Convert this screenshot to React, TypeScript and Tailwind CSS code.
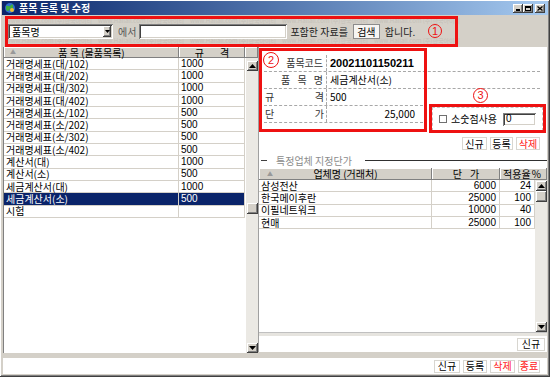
import React from 'react';

const listRows: [string, string][] = [
  ['거래명세표(대/102)', '1000'],
  ['거래명세표(대/202)', '1000'],
  ['거래명세표(대/302)', '1000'],
  ['거래명세표(대/402)', '1000'],
  ['거래명세표(소/102)', '500'],
  ['거래명세표(소/202)', '500'],
  ['거래명세표(소/302)', '500'],
  ['거래명세표(소/402)', '500'],
  ['계산서(대)', '1000'],
  ['계산서(소)', '500'],
  ['세금계산서(대)', '1000'],
  ['세금계산서(소)', '500'],
  ['시험', ''],
];

const priceRows = [
  { name: '삼성전산', price: '6000', rate: '24' },
  { name: '한국메이후란', price: '25000', rate: '100' },
  { name: '이필네트워크', price: '10000', rate: '40' },
  { name: '현매', price: '25000', rate: '100' },
];

const raised =
  'bg-[#d4d0c8] shadow-[inset_-1px_-1px_#404040,inset_1px_1px_#ffffff,inset_-2px_-2px_#808080]';
const sunken =
  'bg-white shadow-[inset_1px_1px_#808080,inset_-1px_-1px_#ffffff,inset_2px_2px_#404040,inset_-2px_-2px_#d4d0c8]';
const headCell =
  'bg-[#d4d0c8] shadow-[inset_-1px_-1px_#808080,inset_1px_1px_#ffffff] flex items-center';

function Arrow({ down = false }: { down?: boolean }) {
  return (
    <svg width="7" height="4" viewBox="0 0 7 4">
      <path d={down ? 'M0 0H7L3.5 4Z' : 'M3.5 0L7 4H0Z'} fill="#000" />
    </svg>
  );
}

function ScrollBtn({ down = false }: { down?: boolean }) {
  return (
    <div className={`w-[11px] h-[10px] ${raised} flex items-center justify-center`}>
      <Arrow down={down} />
    </div>
  );
}

function FlatBtn({ label, red = false, w }: { label: string; red?: boolean; w: string }) {
  return (
    <div
      className={`${w} h-[13px] bg-white border border-[#d8d6d0] flex items-center justify-center leading-none ${
        red ? 'text-[#ff2020]' : 'text-black'
      }`}
    >
      {label}
    </div>
  );
}

function Circled({ n, className }: { n: string; className: string }) {
  return (
    <div
      className={`absolute rounded-full border-[1.5px] border-[#ee1111] text-[#ee1111] flex items-center justify-center text-[11px] leading-none font-['Liberation_Sans',sans-serif] ${className}`}
    >
      {n}
    </div>
  );
}

// faint company watermark in the gaps of the search row
function Watermark() {
  const line = 'www.Hallall.com (주)한국아이티  ';
  return (
    <div className="absolute inset-0 flex flex-col justify-between py-[3px] pl-[4px] pointer-events-none select-none" aria-hidden>
      {[0, 1].map((i) => (
        <div key={i} className="flex gap-[6px] whitespace-nowrap text-[6px] leading-[6px] text-[#c4c0b8]">
          {[0, 1, 2, 3, 4].map((k) => (
            <span key={k}>{line}</span>
          ))}
        </div>
      ))}
    </div>
  );
}

function FormRow({
  label,
  value,
  width,
  bold = false,
  right = false,
}: {
  label: React.ReactNode;
  value: string;
  width: string;
  bold?: boolean;
  right?: boolean;
}) {
  return (
    <div className={`${width} h-[17px] flex border-b border-dashed border-[#a8a8a8]`}>
      <div className="w-[63px] h-full border-r border-dashed border-[#a8a8a8] flex items-center">{label}</div>
      <div
        className={`flex-1 flex items-center ${right ? 'justify-end pr-[8px]' : 'pl-[3px]'} ${
          bold ? "font-bold font-['Liberation_Sans',sans-serif] text-[11px]" : ''
        }`}
      >
        {value}
      </div>
    </div>
  );
}

function Spread({ chars, className }: { chars: string[]; className: string }) {
  return (
    <div className={`flex justify-between text-[#333] ${className}`}>
      {chars.map((c, i) => (
        <span key={i}>{c}</span>
      ))}
    </div>
  );
}

export default function App() {
  return (
    <div className="relative w-[550px] h-[377px] overflow-hidden bg-[#d4d0c8] flex flex-col font-['Noto_Sans_CJK_KR',sans-serif] text-[10px] leading-none text-black shadow-[inset_-1px_-1px_#404040,inset_1px_1px_#ffffff,inset_-2px_-2px_#808080]">
      {/* title bar */}
      <div className="mx-[2px] mt-[1px] h-[14px] flex items-center bg-linear-to-r from-[#0a246a] to-[#a6caf0] pl-[2px] pr-[3px]">
        <svg width="12" height="12" viewBox="0 0 12 12">
          <circle cx="6" cy="6" r="5" fill="#2f6fd0" />
          <path d="M2 4c2-1 3 1 4 0s2-2 3-1v3c-1 1-2 0-3 1s-1 2-2 2-2-1-2-2z" fill="#3fae3f" />
          <circle cx="8" cy="8" r="2" fill="#f2c12e" />
        </svg>
        <span className="ml-[3px] text-white font-bold text-[10px]">품목 등록 및 수정</span>
        <div className="ml-auto flex items-center">
          <div className={`w-[10px] h-[9px] ${raised} flex items-end justify-center pb-[2px]`}>
            <div className="w-[4px] h-[2px] bg-black" />
          </div>
          <div className={`w-[10px] h-[9px] ${raised} flex items-center justify-center`}>
            <div className="w-[6px] h-[5px] border border-black border-t-2" />
          </div>
          <div className={`ml-[2px] w-[10px] h-[9px] ${raised} flex items-center justify-center`}>
            <svg width="6" height="5" viewBox="0 0 6 5">
              <path d="M0.5 0.5L5.5 4.5M5.5 0.5L0.5 4.5" stroke="#000" strokeWidth="1.3" />
            </svg>
          </div>
        </div>
      </div>

      {/* search row */}
      <div className="relative h-[32px] mx-[2px] overflow-hidden">
        <Watermark />
        <div className="relative h-full flex items-center pl-[6px] pt-[1px]">
          <div className={`w-[105px] h-[15px] ${sunken} flex items-center pl-[4px] pr-[2px]`}>
            <span>품목명</span>
            <div className={`ml-auto w-[8px] h-[11px] ${raised} flex items-center justify-center`}>
              <svg width="5" height="3" viewBox="0 0 5 3">
                <path d="M0 0H5L2.5 3Z" fill="#000" />
              </svg>
            </div>
          </div>
          <span className="ml-[5px] text-[#555]">에서</span>
          <div className={`ml-[3px] w-[148px] h-[15px] ${sunken}`} />
          <span className="ml-[3px] text-[#222]">포함한 자료를</span>
          <div className="ml-[5px] w-[27px] h-[15px] bg-[#f6f5f2] border border-[#8c8c8c] flex items-center justify-center">
            검색
          </div>
          <span className="ml-[5px] text-[#222]">합니다.</span>
        </div>
      </div>

      {/* main area */}
      <div className="flex h-[310px] px-[3px]">
        {/* left list */}
        <div className="w-[255px] h-[306px] bg-white border-l border-[#808080] flex flex-col">
          <div className="h-[11px] flex">
            <div className={`w-[175px] h-full ${headCell} relative justify-center`}>
              <span className="absolute left-[6px] top-[2px] text-[6px] text-[#999]">▲</span>
              <span>품 목 (물품목록)</span>
            </div>
            <div className={`w-[66px] h-full ${headCell} justify-center gap-[16px]`}>
              <span>규</span>
              <span>격</span>
            </div>
            <div className={`flex-1 h-full ${headCell}`} />
          </div>
          <div className="flex-1 flex">
            <div className="w-[242px]">
              {listRows.map(([name, spec], i) => {
                const sel = i === 11;
                return (
                  <div
                    key={i}
                    className={`h-[12.3px] flex ${sel ? 'bg-[#0a246a] text-white' : ''}`}
                  >
                    <div className="w-[175px] h-full border-b border-r border-[#d4d0c8] flex items-center pl-[2px]">
                      {name}
                    </div>
                    <div className="w-[66px] h-full border-b border-r border-[#d4d0c8] flex items-center pl-[2px] font-['Liberation_Sans',sans-serif]">
                      {spec}
                    </div>
                  </div>
                );
              })}
            </div>
            <div className="w-[12px] ml-[1px] bg-[#ebe9e4] flex flex-col items-center pt-[3px]">
              <ScrollBtn />
              <div className={`mt-[132px] w-[11px] h-[11px] ${raised}`} />
              <div className="mt-auto">
                <ScrollBtn down />
              </div>
            </div>
          </div>
        </div>

        {/* right panel */}
        <div className="flex-1 flex flex-col">
          <div className="h-[305px] bg-white border-l border-[#a0a0a0] flex flex-col">
            {/* detail form */}
            <div className="h-[87px] pl-[5px] pt-[8px]">
              <FormRow
                width="w-[276px]"
                label={<span className="ml-auto pr-[3px] text-[#333]">품목코드</span>}
                value="20021101150211"
                bold
              />
              <FormRow
                width="w-[276px]"
                label={<Spread chars={['품', '목', '명']} className="ml-auto w-[42px] mr-[3px]" />}
                value="세금계산서(소)"
              />
              <div className="flex">
                <div className="w-[159px]">
                  <FormRow
                    width="w-[159px]"
                    label={<Spread chars={['규', '격']} className="ml-[1px] w-[59px]" />}
                    value="500"
                  />
                  <FormRow
                    width="w-[159px]"
                    label={<Spread chars={['단', '가']} className="ml-[1px] w-[59px]" />}
                    value="25,000"
                    right
                  />
                </div>
                <div className="ml-[9px] mt-[18px] w-[111px] h-[24px] border border-dashed border-[#c4c4c4] flex items-center pl-[6px] pr-[6px]">
                  <div className="w-[8px] h-[8px] border border-[#707070] bg-white" />
                  <span className="ml-[4px] whitespace-nowrap">소숫점사용</span>
                  <div className={`ml-auto w-[33px] h-[13px] ${sunken} flex items-center pl-[3px] font-['Liberation_Sans',sans-serif]`}>
                    0
                  </div>
                </div>
              </div>
            </div>

            {/* form buttons */}
            <div className="h-[19px] flex items-center justify-end pr-[7px] gap-[3px]">
              <FlatBtn label="신규" w="w-[25px]" />
              <FlatBtn label="등록" w="w-[23px]" />
              <FlatBtn label="삭제" w="w-[24px]" red />
            </div>

            {/* section title */}
            <div className="h-[15px] flex items-center">
              <div className="ml-[2px] w-[6px] h-[1px] bg-[#404040]" />
              <span className="ml-[9px] text-[#8c8c8c]">특정업체 지정단가</span>
              <div className="ml-[13px] flex-1 h-[1px] bg-[#303030]" />
            </div>

            {/* price grid */}
            <div className="h-[165px] flex flex-col border-b border-[#c0c0c0]">
              <div className="h-[12px] flex">
                <div className={`w-[173px] h-full ${headCell} relative justify-center`}>
                  <span className="absolute left-[8px] top-[3px] text-[6px] text-[#999]">▲</span>
                  <span>업체명 (거래처)</span>
                </div>
                <div className={`w-[68px] h-full ${headCell} justify-center gap-[8px]`}>
                  <span>단</span>
                  <span>가</span>
                </div>
                <div className={`flex-1 h-full ${headCell} justify-between pl-[3px] pr-[6px]`}>
                  <span>적용율</span>
                  <span>%</span>
                </div>
              </div>
              <div className="flex-1 flex">
                <div className="w-[276px]">
                  {priceRows.map((r, i) => (
                    <div key={i} className="h-[12.3px] flex">
                      <div className="w-[173px] h-full border-b border-r border-[#d4d0c8] flex items-center pl-[2px]">
                        {r.name}
                      </div>
                      <div className="w-[68px] h-full border-b border-r border-[#d4d0c8] flex items-center justify-end pr-[3px] font-['Liberation_Sans',sans-serif]">
                        {r.price}
                      </div>
                      <div className="w-[35px] h-full border-b border-r border-[#d4d0c8] flex items-center justify-end pr-[3px] font-['Liberation_Sans',sans-serif]">
                        {r.rate}
                      </div>
                    </div>
                  ))}
                </div>
                <div className="flex-1 bg-[#ebe9e4] flex flex-col items-center pt-[1px]">
                  <ScrollBtn />
                  <div className={`w-[11px] h-[11px] ${raised}`} />
                  <div className="mt-auto">
                    <ScrollBtn down />
                  </div>
                </div>
              </div>
            </div>

            <div className="h-[3px] bg-[#e6e4df]" />
            <div className="flex-1 flex items-center justify-end pr-[2px]">
              <FlatBtn label="신규" w="w-[28px]" />
            </div>
          </div>
        </div>
      </div>

      {/* bottom buttons */}
      <div className="mx-[3px] mt-[1px] h-[16px] bg-white flex items-center justify-end pr-[7px] gap-[3px]">
        <FlatBtn label="신규" w="w-[26px]" />
        <FlatBtn label="등록" w="w-[24px]" />
        <FlatBtn label="삭제" w="w-[25px]" red />
        <FlatBtn label="종료" w="w-[22px]" red />
      </div>

      {/* annotations */}
      <div className="absolute left-[5px] top-[16px] w-[453px] h-[31px] border-[3px] border-[#ee1111]" />
      <Circled n="1" className="left-[428px] top-[24px] w-[14px] h-[14px]" />
      <div className="absolute left-[259px] top-[48px] w-[168px] h-[84px] border-[3px] border-[#ee1111]" />
      <Circled n="2" className="left-[263px] top-[52px] w-[16px] h-[16px] bg-white" />
      <div className="absolute left-[429px] top-[104px] w-[117px] h-[29px] border-[3px] border-[#ee1111]" />
      <Circled n="3" className="left-[473px] top-[88px] w-[15px] h-[15px] bg-white" />
    </div>
  );
}
